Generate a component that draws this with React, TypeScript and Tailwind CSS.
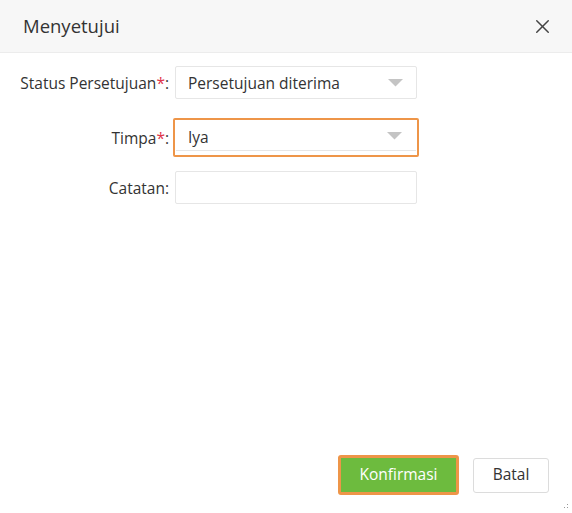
import { X } from "lucide-react";

const font = { fontFamily: '"Open Sans", "Noto Sans", sans-serif' };

const Caret = () => (
  <svg width="15" height="8" viewBox="0 0 15 8" className="shrink-0">
    <path d="M0 0 L15 0 L7.5 7.5 Z" fill="#c4c4c4" />
  </svg>
);

export default function App() {
  return (
    <div
      className="w-[572px] h-[513px] bg-white flex flex-col text-[#333] relative overflow-hidden"
      style={font}
    >
      <div className="h-[53px] bg-[#f7f7f7] border-b border-[#ececec] flex items-center justify-between pl-[23px] pr-[18px] shrink-0">
        <span className="text-[18.5px] leading-none pt-[1px]">Menyetujui</span>
        <X className="w-[23px] h-[23px] text-[#444]" strokeWidth={1.5} />
      </div>

      <div className="flex flex-col pt-[13px]">
        <div className="flex items-center h-[33px]">
          <div className="w-[170px] text-right text-[15.5px] pr-[1px] pt-[2px] whitespace-nowrap">
            Status Persetujuan<span className="text-[#e0334a]">*</span>:
          </div>
          <div className="ml-[5px] w-[242px] h-[33px] border border-[#e6e6e6] rounded-[2px] flex items-center justify-between pl-[12px] pr-[13px] text-[15.5px]">
            <span className="pt-[3px]">Persetujuan diterima</span>
            <Caret />
          </div>
        </div>

        <div className="flex items-center h-[39px] mt-[19px]">
          <div className="w-[170px] text-right text-[15.5px] pr-[1px] pt-[2px]">
            Timpa<span className="text-[#e0334a]">*</span>:
          </div>
          <div className="ml-[3px] w-[246px] h-[39px] border-2 border-[#ee9548] rounded-[2px] flex flex-col">
            <div className="flex-1 mx-[1px] border-b border-[#e6e6e6] flex items-center justify-between pl-[12px] pr-[14px] text-[15.5px] pt-[2px]">
              <span className="pt-[3px]">Iya</span>
              <Caret />
            </div>
            <div className="h-[4px]" />
          </div>
        </div>

        <div className="flex items-center h-[33px] mt-[14px]">
          <div className="w-[170px] text-right text-[15.5px] pr-[1px] pt-[2px]">Catatan:</div>
          <div className="ml-[5px] w-[242px] h-[33px] border border-[#e6e6e6] rounded-[2px]" />
        </div>
      </div>

      <div className="flex-1" />

      <div className="flex items-center justify-end gap-[14px] pr-[23px] pb-[18px]">
        <button className="w-[121px] h-[40px] bg-[#6dbb3e] border-[3px] border-[#ee9548] rounded-[3px] text-white text-[15.5px]">
          Konfirmasi
        </button>
        <button className="w-[76px] h-[35px] bg-white border border-[#dcdcdc] rounded-[3px] text-[#333] text-[15.5px]">
          Batal
        </button>
      </div>

      <div className="absolute right-[4px] bottom-[5px] flex flex-col items-end gap-[2px]">
        <span className="w-[1px] h-[1px] bg-[#999]" />
        <span className="flex gap-[2px]">
          <span className="w-[1px] h-[1px] bg-[#999]" />
          <span className="w-[1px] h-[1px] bg-[#999]" />
        </span>
      </div>
    </div>
  );
}
